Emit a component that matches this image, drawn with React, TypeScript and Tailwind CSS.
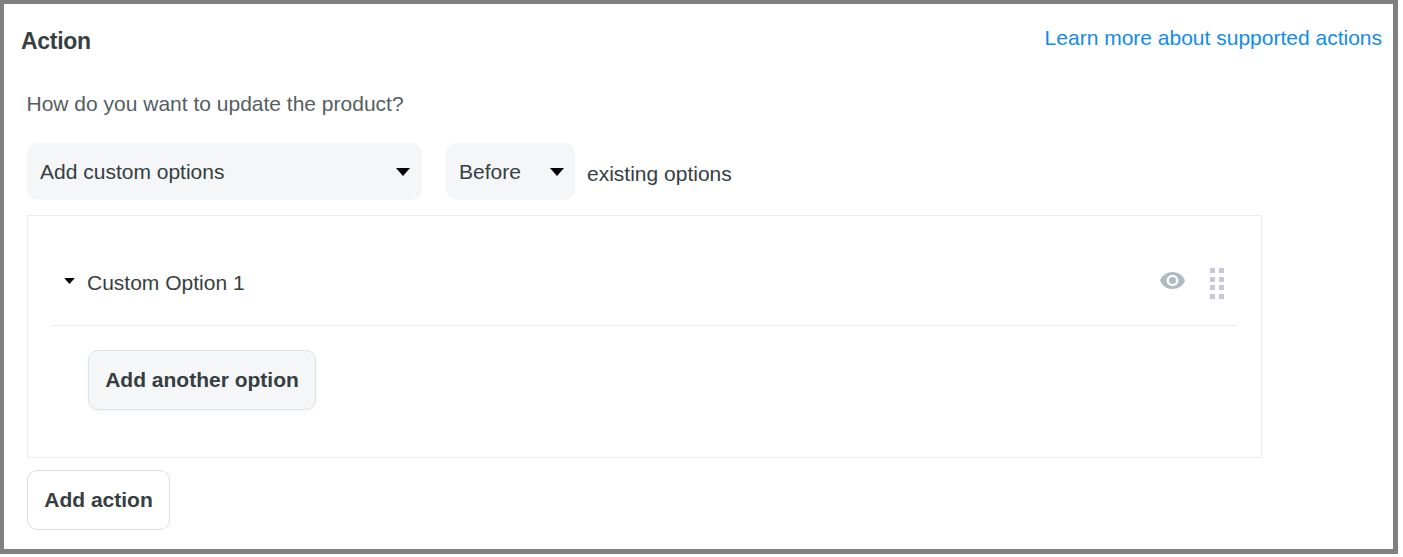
import React from 'react';

const options = [{ name: 'Custom Option 1' }];

const Caret = ({ className }: { className: string }) => (
  <svg viewBox="0 0 14 8" className={className} fill="#000">
    <path d="M0 0h14L7 8z" />
  </svg>
);

const EyeIcon = () => (
  <svg viewBox="0 0 24 17" preserveAspectRatio="none" className="w-[25px] h-[17px]" fill="#b0bac0">
    <path
      fillRule="evenodd"
      d="M12 0C6.5 0 1.9 3.5 0 8.5 1.9 13.5 6.5 17 12 17s10.100-3.500 12-8.500C22.100 3.500 17.500 0 12 0zm0 14.200a5.700 5.700 0 1 1 0-11.400 5.700 5.700 0 0 1 0 11.400zm0-9.100a3.400 3.400 0 1 0 0 6.800 3.400 3.400 0 0 0 0-6.800z"
    />
  </svg>
);

const DragHandle = () => (
  <div className="grid grid-cols-2 gap-x-1 gap-y-[3.500px]">
    {Array.from({ length: 8 }).map((_, index) => (
      <span key={index} className="w-[5px] h-[5px] bg-[#c9c8d9]" />
    ))}
  </div>
);

const App = () => {
  return (
    <div className="w-[1403px] h-[557px] bg-white overflow-hidden font-['Liberation_Sans',Arial,sans-serif] text-[21px] leading-6 text-[#363e42]">
      <div className="w-[1398px] h-[554px] border-4 border-r-[5px] border-b-[5px] border-[#808080]">
        <div className="flex justify-between pl-[17px] pr-[11px] pt-[22px]">
          <h2 className="mt-[3px] text-[23px] leading-6 font-bold tracking-[-0.3px]">Action</h2>
          <a href="#" className="text-[#118cec]">Learn more about supported actions</a>
        </div>

        <div className="pl-[23px] pt-[39px]">
          <p className="text-[#545e63] -ml-[0.5px]">How do you want to update the product?</p>

          <div className="flex mt-[27px]">
            <button className="flex items-center justify-between w-[395px] h-[57px] pl-[13px] pr-3 rounded-[10px] bg-[#f4f6f8]">
              Add custom options
              <Caret className="w-[14px] h-2" />
            </button>
            <button className="flex items-center justify-between w-[129px] h-[57px] ml-6 pl-[13px] pr-[11px] rounded-[10px] bg-[#f4f6f8]">
              Before
              <Caret className="w-[14px] h-2" />
            </button>
            <span className="ml-3 mt-[19px]">existing options</span>
          </div>

          <div className="w-[1235px] h-[243px] mt-[15px] px-6 border border-[#ebecf1]">
            {options.map((option) => (
              <div
                key={option.name}
                className="flex items-start h-[110px] w-[1185px] pl-3 pr-[13px] pt-[51px] border-b border-[#ebecf1]"
              >
                <Caret className="w-[11px] h-1.5 mt-[11px]" />
                <span className="ml-3 mt-1">{option.name}</span>
                <div className="flex ml-auto gap-[25.500px]">
                  <div className="mt-[5px]">
                    <EyeIcon />
                  </div>
                  <div className="mt-px">
                    <DragHandle />
                  </div>
                </div>
              </div>
            ))}
            <button className="block w-[228px] h-[60px] ml-9 mt-6 rounded-[10px] border border-[#dee0e3] bg-[#f4f6f8] font-bold shadow-[0_2px_4px_rgba(0,0,0,0.04)]">
              Add another option
            </button>
          </div>

          <button className="block w-[143px] h-[60px] mt-3 rounded-[10px] border border-[#dcdee0] bg-white font-bold">
            Add action
          </button>
        </div>
      </div>
    </div>
  );
};

export default App;
